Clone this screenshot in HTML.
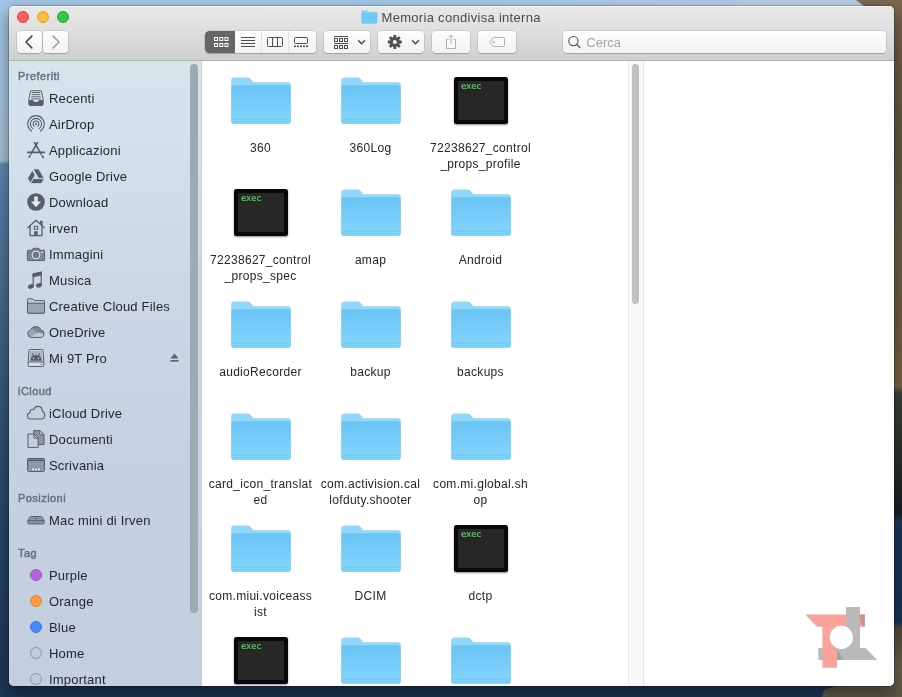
<!DOCTYPE html>
<html lang="it">
<head>
<meta charset="utf-8">
<title>Memoria condivisa interna</title>
<style>
html,body{margin:0;padding:0;}
body{width:902px;height:697px;overflow:hidden;position:relative;font-family:"Liberation Sans",sans-serif;background:#2a4668;}
.abs{position:absolute;}
/* desktop wallpaper */
#wall{position:absolute;left:0;top:0;width:902px;height:697px;overflow:hidden;
 background:linear-gradient(to bottom,#a3c5e6 0px,#a8c6e2 90px,#a9c0d6 158px,#a3bbd1 161px,#5f8bb3 164px,#587fa8 200px,#4e7299 260px,#3f5e83 360px,#2e4b6f 470px,#233f62 600px,#1d3757 697px);}
#mount{position:absolute;left:800px;top:0;width:102px;height:697px;
 background:linear-gradient(to bottom,#7f6851 0px,#6d5b45 60px,#605b40 140px,#6a5e45 260px,#6e5f42 330px,#7c6645 386px,#3b4238 393px,#2b302c 460px,#1a1f23 512px,#1b3758 521px,#183456 600px,#1a3557 622px,#504c3c 628px,#6a6450 670px,#5e5947 697px);
 clip-path:polygon(56px 0,102px 0,102px 697px,22px 697px,24px 690px,42px 684px,90px 640px,90px 20px,64px 6px);}
#shadow{position:absolute;left:9px;top:6px;width:885px;height:680px;border-radius:5px;box-shadow:0 8px 16px 2px rgba(0,0,0,.38),0 0 0 1px rgba(0,0,0,.18);}
/* window */
#win{will-change:transform;position:absolute;left:9px;top:6px;width:885px;height:680px;border-radius:5px;overflow:hidden;background:#fff;}
#tb{position:absolute;left:0;top:0;width:885px;height:54px;background:linear-gradient(to bottom,#e8e8e8 0,#e0e0e0 22px,#cfcfcf 54px);border-bottom:1px solid #b2b2b2;box-shadow:inset 0 1px 0 #f4f4f4;}
.tl{position:absolute;top:5px;width:12px;height:12px;border-radius:50%;box-sizing:border-box;}
.btn{position:absolute;top:25px;height:22px;box-sizing:border-box;border-radius:4px;background:linear-gradient(to bottom,#fdfdfd,#f3f3f3);box-shadow:0 0 0 .5px rgba(0,0,0,.16),0 1px 1px rgba(0,0,0,.18);}
#title{position:absolute;left:372.500px;top:4px;font-size:13px;line-height:16px;color:#4a4a4a;white-space:nowrap;letter-spacing:.3px;}
/* sidebar */
#sb{position:absolute;left:0;top:55px;width:192px;height:625px;background:linear-gradient(to bottom,#d6e5ec 0,#d2e0ea 100px,#cad6e3 260px,#c5d1e0 420px,#c3cfde 625px);border-right:1px solid #c9d0d6;}
.sh{position:absolute;left:9px;font-size:11px;line-height:14px;font-weight:normal;color:#66707a;-webkit-text-stroke:.45px #66707a;white-space:nowrap;letter-spacing:.45px;}
.si{position:absolute;left:40px;font-size:13px;line-height:16px;color:#24272a;white-space:nowrap;letter-spacing:.2px;}
.ico{position:absolute;left:17px;width:20px;height:20px;}
.dot{position:absolute;left:21px;width:12px;height:12px;border-radius:50%;box-sizing:border-box;}
/* content */
#ct{position:absolute;left:193px;top:55px;width:692px;height:625px;background:#fff;overflow:hidden;}
.lbl{position:absolute;width:110px;text-align:center;font-size:12px;line-height:16px;color:#262626;letter-spacing:.3px;}
.fold{position:absolute;width:60px;height:48px;filter:drop-shadow(0 .6px .6px rgba(40,90,130,.45));}
.exec{position:absolute;width:54px;height:47px;box-sizing:border-box;background:#272727;border:4px solid #080808;border-radius:2.5px;box-shadow:0 1px 2px rgba(0,0,0,.45);}
.exec span{position:absolute;left:3px;top:.2px;font-family:"DejaVu Sans Mono","Liberation Mono",monospace;font-size:8.600px;line-height:10px;color:#4fd05f;-webkit-text-stroke:.2px #4fd05f;letter-spacing:-.1px;}
</style>
</head>
<body>
<div id="wall"><div class="abs" style="left:0;top:0;width:902px;height:12px;background:linear-gradient(to right,rgba(190,208,226,0) 45%,rgba(196,212,228,.7) 94%);"></div><div id="mount"></div></div>
<div id="shadow"></div>
<div id="win">
 <div id="tb">
  <div class="tl" style="left:8px;background:#fc605c;border:.5px solid #e0443e;"></div>
  <div class="tl" style="left:28px;background:#fdbc40;border:.5px solid #dfa023;"></div>
  <div class="tl" style="left:48px;background:#34c84a;border:.5px solid #1fa930;"></div>
  <svg class="abs" style="left:352px;top:3px" width="17" height="16" viewBox="0 0 17 16"><path d="M.5 2.2Q.5 1.2 1.5 1.2H5.6Q6.2 1.2 6.6 1.8L7.3 2.8H15.3Q16.3 2.8 16.3 3.8V13.6Q16.3 14.6 15.3 14.6H1.5Q.5 14.6 .5 13.6Z" fill="#8fd5fa"/><path d="M.5 4.6Q.5 3.8 1.4 3.8H15.4Q16.3 3.8 16.3 4.6V13.6Q16.3 14.6 15.3 14.6H1.5Q.5 14.6 .5 13.6Z" fill="#6fc8f6"/></svg>
  <div id="title">Memoria condivisa interna</div>
  <div class="btn" style="left:8px;width:25px;"><svg width="25" height="22" viewBox="0 0 25 22"><path d="M14.8 5.2L9 11l5.8 5.8" fill="none" stroke="#4b4b4b" stroke-width="1.7" stroke-linecap="round" stroke-linejoin="round"/></svg></div>
  <div class="btn" style="left:34px;width:25px;"><svg width="25" height="22" viewBox="0 0 25 22"><path d="M10.2 5.2L16 11l-5.8 5.8" fill="none" stroke="#a3a3a3" stroke-width="1.7" stroke-linecap="round" stroke-linejoin="round"/></svg></div>
  <div class="btn" style="left:196px;width:111px;overflow:hidden;">
    <div class="abs" style="left:0;top:0;width:30px;height:22px;background:#656565;border-radius:4px 0 0 4px;"></div>
    <div class="abs" style="left:56px;top:0;width:1px;height:22px;background:#e2e2e2;"></div>
    <div class="abs" style="left:83px;top:0;width:1px;height:22px;background:#e2e2e2;"></div>
    <svg class="abs" style="left:0;top:0" width="111" height="22" viewBox="0 0 111 22">
      <g fill="none" stroke="#fff" stroke-width="1">
        <rect x="9.5" y="6.5" width="3" height="3"/><rect x="14.75" y="6.5" width="3" height="3"/><rect x="20" y="6.5" width="3" height="3"/>
        <rect x="9.5" y="12.5" width="3" height="3"/><rect x="14.75" y="12.5" width="3" height="3"/><rect x="20" y="12.5" width="3" height="3"/>
      </g>
      <g stroke="#4f4f4f" stroke-width="1" fill="none">
        <path d="M36 6.5h14M36 9.5h14M36 12.5h14M36 15.5h14"/>
        <rect x="62.5" y="6.5" width="15" height="9" rx="1"/><path d="M67.5 6.5v9M72.5 6.5v9"/>
        <rect x="89.5" y="6.5" width="13" height="6" rx="1"/>
      </g>
      <g fill="#4f4f4f"><rect x="89" y="14.5" width="2" height="1.6"/><rect x="92" y="14.5" width="2" height="1.6"/><rect x="95" y="14.5" width="2" height="1.6"/><rect x="98" y="14.5" width="2" height="1.6"/><rect x="101" y="14.5" width="2" height="1.6"/></g>
    </svg>
  </div>
  <div class="btn" style="left:315px;width:46px;"><svg width="46" height="22" viewBox="0 0 46 22">
    <g fill="none" stroke="#4f4f4f" stroke-width="1"><path d="M10 5.5h14M10 12.5h14"/>
      <rect x="10.5" y="7.5" width="3" height="3"/><rect x="15.5" y="7.5" width="3" height="3"/><rect x="20.5" y="7.5" width="3" height="3"/>
      <rect x="10.5" y="14.5" width="3" height="3"/><rect x="15.5" y="14.5" width="3" height="3"/><rect x="20.5" y="14.5" width="3" height="3"/>
      <path d="M34.2 9.4l3.3 3.3 3.3-3.3" stroke-width="1.5"/></g></svg></div>
  <div class="btn" style="left:369px;width:46px;"><svg width="46" height="22" viewBox="0 0 46 22">
    <g transform="translate(16.8 11)"><g fill="#4f4f4f"><rect x="-1.4" y="-7" width="2.8" height="14" rx=".6"/><rect x="-1.4" y="-7" width="2.8" height="14" rx=".6" transform="rotate(45)"/><rect x="-1.4" y="-7" width="2.8" height="14" rx=".6" transform="rotate(90)"/><rect x="-1.4" y="-7" width="2.8" height="14" rx=".6" transform="rotate(135)"/><circle r="5"/></g><circle r="2.1" fill="#f8f8f8"/></g>
    <path d="M34.2 9.4l3.3 3.3 3.3-3.3" fill="none" stroke="#4f4f4f" stroke-width="1.5"/></svg></div>
  <div class="btn" style="left:423px;width:38px;"><svg width="38" height="22" viewBox="0 0 38 22"><g fill="none" stroke="#b0b0b0" stroke-width="1"><path d="M16.5 8.5h-2v9h9v-9h-2"/><path d="M19 13V4.2M16.6 6.4L19 4l2.4 2.4"/></g></svg></div>
  <div class="btn" style="left:469px;width:38px;"><svg width="38" height="22" viewBox="0 0 38 22"><g fill="none" stroke="#b0b0b0" stroke-width="1"><path d="M15.5 6.5H25.5Q26.5 6.5 26.5 7.5V14.5Q26.5 15.5 25.5 15.5H15.5L11.5 11Z" stroke-linejoin="round"/><circle cx="15.6" cy="11" r=".9"/></g></svg></div>
  <div class="btn" style="left:554px;width:323px;"><svg class="abs" style="left:0;top:0" width="22" height="22" viewBox="0 0 22 22"><circle cx="10.4" cy="10.100" r="4.600" fill="none" stroke="#4e4e4e" stroke-width="1.100"/><path d="M13.700 13.400l3.300 3.200" stroke="#4e4e4e" stroke-width="1.300" stroke-linecap="round"/></svg><span class="abs" style="left:23.300px;top:3.500px;font-size:13px;line-height:16px;color:#a6a6a6;">Cerca</span></div>
 </div>
 <div id="sb">
  <div class="sh" style="top:8px">Preferiti</div>
  <svg class="ico" style="top:27px" viewBox="0 0 20 20"><path d="M4.600 2.800h10.800l1.700 8.600v4.800q0 1.200-1.200 1.200H4.100q-1.200 0-1.200-1.200v-4.800Z" fill="#e4eaef" stroke="#565e68" stroke-width="1" stroke-linejoin="round"/><path d="M2.900 11.900h4.300l.8 1.900h4l.8-1.900h4.300v4.300q0 1.200-1.200 1.200H4.100q-1.200 0-1.200-1.200Z" fill="#565e68"/><path d="M5.800 4.600h8.400M5.500 6.700h9M5.200 8.800h9.600M4.900 10.900h10.200" stroke="#565e68" stroke-width="1" fill="none"/></svg>
  <div class="si" style="top:30px">Recenti</div>
  <svg class="ico" style="top:53px" viewBox="0 0 20 20"><g fill="none" stroke="#565e68" stroke-width="1.1" stroke-linecap="round"><path d="M5.6 17A8.3 8.3 0 1 1 14.4 17"/><path d="M6.9 14.6A5.6 5.6 0 1 1 13.1 14.6"/><path d="M8.3 12.2A2.9 2.9 0 1 1 11.7 12.2"/></g><circle cx="10" cy="10" r="1" fill="#565e68"/></svg>
  <div class="si" style="top:56px">AirDrop</div>
  <svg class="ico" style="top:79px" viewBox="0 0 20 20"><g fill="none" stroke="#565e68" stroke-width="1.700" stroke-linecap="round"><path d="M11.400 2.600L5 13.800"/><path d="M8.500 2.600L15 13.900"/><path d="M1.600 12.300H18.400" stroke-width="1.800"/><path d="M3.900 15.800L3.200 17"/><path d="M16.200 15.900L17.100 17.400"/></g></svg>
  <div class="si" style="top:82px">Applicazioni</div>
  <svg class="ico" style="top:105px" viewBox="0 0 20 20"><g fill="#565e68" stroke="#d6e1ea" stroke-width=".7"><path d="M7.100 2.900h5.600l5.500 9.500h-5.600Z"/><path d="M6.300 4.200l2.800 4.900-4.700 8.100-2.800-4.900Z"/><path d="M7.300 12.700h11l-2.800 4.800H4.500Z"/></g></svg>
  <div class="si" style="top:108px">Google Drive</div>
  <svg class="ico" style="top:131px" viewBox="0 0 20 20"><circle cx="10" cy="10" r="8.8" fill="#565e68"/><path d="M8.2 4.6h3.6v5h3.3L10 15.3 4.9 9.6h3.3Z" fill="#e3eaf0"/></svg>
  <div class="si" style="top:134px">Download</div>
  <svg class="ico" style="top:157px" viewBox="0 0 20 20"><g fill="none" stroke="#565e68" stroke-width="1.300" stroke-linejoin="round" stroke-linecap="round"><path d="M1.800 9.800L10 2.200l8.200 7.600"/><path d="M4 8.400V17.600H16V8.400"/><path d="M14.600 5.800V3.400h1.500V7.200"/></g><rect x="8.300" y="8.300" width="3.400" height="3" fill="none" stroke="#565e68" stroke-width="1"/><rect x="8" y="13.200" width="3.600" height="4.400" fill="#565e68"/></svg>
  <div class="si" style="top:160px">irven</div>
  <svg class="ico" style="top:183px" viewBox="0 0 20 20"><path d="M1.400 7.200q0-.9.900-.9h3.500l.9-1.500q.3-.5.900-.5h4.800q.6 0 .9.500l.9 1.500h3.500q.9 0 .9.900v8.500q0 .9-.9.900H2.300q-.9 0-.9-.9Z" fill="#7b8490" stroke="#565e68" stroke-width="1"/><circle cx="10" cy="11" r="3.900" fill="#6d7682" stroke="#e6ecf1" stroke-width="1"/><rect x="15" y="7.800" width="2" height="1.200" fill="#e6ecf1"/></svg>
  <div class="si" style="top:186px">Immagini</div>
  <svg class="ico" style="top:209px" viewBox="0 0 20 20"><g fill="#565e68"><path d="M6.600 3.600L15.800 1.300V5.300L6.600 7.600Z"/><path d="M6.600 3.600H7.800V16.300H6.600Z"/><path d="M14.600 2H15.800V15H14.600Z"/><ellipse cx="4.900" cy="16.500" rx="3" ry="2.200" transform="rotate(-18 4.900 16.500)"/><ellipse cx="13" cy="15.300" rx="3" ry="2.200" transform="rotate(-18 13 15.300)"/></g></svg>
  <div class="si" style="top:212px">Musica</div>
  <svg class="ico" style="top:235px" viewBox="0 0 20 20"><path d="M1.500 3.600q0-.8.800-.8h4.600l1.500 1.700h9.300q.8 0 .8.800v11.100q0 .8-.8.800H2.300q-.8 0-.8-.8Z" fill="#c3cdd8" stroke="#565e68" stroke-width="1" stroke-linejoin="round"/><path d="M1.500 7.200h17v9.200q0 .8-.8.800H2.300q-.8 0-.8-.8Z" fill="#9ba6b3" stroke="#565e68" stroke-width="1" stroke-linejoin="round"/></svg>
  <div class="si" style="top:238px">Creative Cloud Files</div>
  <svg class="ico" style="top:261px" viewBox="0 0 20 20"><path d="M4.800 15.400A3.850 3.850 0 0 1 4.600 7.900A5.700 5.700 0 0 1 15 7.900A3.900 3.900 0 0 1 15.400 15.400Z" fill="#9ca5b0"/><path d="M6 6.600Q8 4.600 10 4.600 13.600 4.600 14.600 8.300 17.600 8.700 18.300 11.200L11.300 10.900Z" fill="#7f8995"/><path d="M4.500 15.100L11.200 10.900Q14.500 10.600 18.400 12.400 18 15 15.500 15.100Z" fill="#c6ced7"/><path d="M4.800 15.400A3.850 3.850 0 0 1 4.600 7.900A5.700 5.700 0 0 1 15 7.900A3.900 3.900 0 0 1 15.400 15.400Z" fill="none" stroke="#565e68" stroke-width="1" stroke-linejoin="round"/></svg>
  <div class="si" style="top:264px">OneDrive</div>
  <svg class="ico" style="top:287px" viewBox="0 0 20 20"><path d="M4 1.500h12q.9 0 1 .9l.8 11.600v3.500q0 1-1 1H3.200q-1 0-1-1v-3.500L3 2.400q.1-.9 1-.9Z" fill="#d3dbe3" stroke="#565e68" stroke-width="1"/><path d="M4.300 3h11.400l.7 9.800H3.600Z" fill="#a9b3bf"/><path d="M2.200 13.900h15.600" stroke="#565e68" stroke-width="1"/><path d="M4.300 12.800q0-5.600 5.700-5.600t5.700 5.600Z" fill="#565e68"/><path d="M6.400 5.800l1.400 2.200M13.600 5.800l-1.400 2.200" stroke="#565e68" stroke-width="1.100" stroke-linecap="round"/><circle cx="7.600" cy="10.400" r=".8" fill="#c6cfd9"/><circle cx="12.400" cy="10.400" r=".8" fill="#c6cfd9"/><circle cx="15.200" cy="16.200" r=".7" fill="#565e68"/></svg>
  <div class="si" style="top:290px">Mi 9T Pro</div>
  <div class="sh" style="top:323px">iCloud</div>
  <svg class="ico" style="top:342px" viewBox="0 0 20 20"><path d="M4.800 16q-3.400 0-3.400-3.200 0-2.500 2.500-3.100-.2-3 2.400-3.400.8-.1 1.500.4 1-3.300 4.300-3.300 4 0 4.200 4.800 2.400.7 2.400 3.700 0 4.100-3.800 4.100Z" fill="#c6d0db" stroke="#565e68" stroke-width="1.100" stroke-linejoin="round"/></svg>
  <div class="si" style="top:345px">iCloud Drive</div>
  <svg class="ico" style="top:368px" viewBox="0 0 20 20"><path d="M7.600 1.600h6.200l4.200 4.200v9.800H7.600Z" fill="#8e98a5" stroke="#565e68" stroke-width="1" stroke-linejoin="round"/><path d="M13.800 1.600v4.200H18Z" fill="#dfe6ec" stroke="#565e68" stroke-width="1" stroke-linejoin="round"/><path d="M2 5h6l4.200 4.200v9.200H2Z" fill="#c6cfd9" stroke="#565e68" stroke-width="1" stroke-linejoin="round"/><path d="M8 5v4.200h4.200" fill="none" stroke="#565e68" stroke-width="1" stroke-linejoin="round"/></svg>
  <div class="si" style="top:371px">Documenti</div>
  <svg class="ico" style="top:394px" viewBox="0 0 20 20"><rect x="1.500" y="3.500" width="17" height="13" rx="1.200" fill="#8e98a5" stroke="#565e68" stroke-width="1"/><path d="M1.500 5.300h17" stroke="#565e68" stroke-width="1.600"/><rect x="6" y="13.600" width="2" height="1.700" fill="#e6ecf1"/><rect x="9" y="13.600" width="2" height="1.700" fill="#e6ecf1"/><rect x="12" y="13.600" width="2" height="1.700" fill="#e6ecf1"/></svg>
  <div class="si" style="top:397px">Scrivania</div>
  <div class="sh" style="top:430px">Posizioni</div>
  <svg class="ico" style="top:449px" viewBox="0 0 20 20"><path d="M5.200 6.500h9.600q.7 0 1.200.6l1.800 2.600q.4.600.4 1.300v1.700q0 1.200-1.200 1.200H3q-1.200 0-1.200-1.200V11q0-.7.400-1.300L4 7.100q.5-.6 1.200-.6Z" fill="#8e98a5" stroke="#565e68" stroke-width="1" stroke-linejoin="round"/><path d="M1.800 10.800h16.400" stroke="#565e68" stroke-width="1"/><rect x="9" y="7.900" width="2" height="1.200" rx=".3" fill="#565e68"/></svg>
  <div class="si" style="top:452px">Mac mini di Irven</div>
  <div class="sh" style="top:485px">Tag</div>
  <div class="dot" style="top:508px;background:#b565d9;border:1px solid #a04fc6;"></div>
  <div class="si" style="top:507px">Purple</div>
  <div class="dot" style="top:534px;background:#fd9a3b;border:1px solid #e8822a;"></div>
  <div class="si" style="top:533px">Orange</div>
  <div class="dot" style="top:560px;background:#4a8cf7;border:1px solid #2f74e6;"></div>
  <div class="si" style="top:559px">Blue</div>
  <div class="dot" style="top:586px;background:#c2cbd6;border:1px solid #8d959e;"></div>
  <div class="si" style="top:585px">Home</div>
  <div class="dot" style="top:612px;background:#c2cbd6;border:1px solid #8d959e;"></div>
  <div class="si" style="top:611px">Important</div>
  <svg class="abs" style="left:160px;top:291px" width="11" height="12" viewBox="0 0 11 12"><path d="M5.500 1.500L9.500 6.500H1.500Z" fill="#5d656f"/><rect x="1.500" y="8" width="8" height="1.700" fill="#5d656f"/></svg>
  <div class="abs" style="left:181px;top:3px;width:7.800px;height:549px;border-radius:4px;background:#9fa9b1;"></div>
 </div>
 <div id="ct">
  <svg class="fold" style="left:28.5px;top:16px" viewBox="0 0 60 48"><defs><linearGradient id="g1" x1="0" y1="0" x2="0" y2="1"><stop offset="0" stop-color="#68c4f5"/><stop offset="1" stop-color="#85d5fb"/></linearGradient></defs><path d="M0.500 3.200Q.5.700 3 .7H17Q18.800.7 19.800 2.200L21.500 4.800Q22 5.500 23 5.500H57Q59.500 5.500 59.500 8V44Q59.500 46.500 57 46.500H3Q.5 46.500.5 44Z" fill="#93d8fb"/><path d="M.5 10.200Q.5 8.200 2.500 8.200H57.500Q59.500 8.200 59.500 10.200V44.500Q59.500 46.800 57.200 46.800H2.800Q.5 46.800.5 44.500Z" fill="url(#g1)"/><path d="M.5 42.300H59.500M.5 44.500H59.500" stroke="#6cc5f3" stroke-width=".8" fill="none"/></svg>
  <div class="lbl" style="left:3.5px;top:79px">360</div>
  <svg class="fold" style="left:138.5px;top:16px" viewBox="0 0 60 48"><defs><linearGradient id="g2" x1="0" y1="0" x2="0" y2="1"><stop offset="0" stop-color="#68c4f5"/><stop offset="1" stop-color="#85d5fb"/></linearGradient></defs><path d="M0.500 3.200Q.5.700 3 .7H17Q18.800.7 19.800 2.200L21.500 4.800Q22 5.500 23 5.500H57Q59.500 5.500 59.500 8V44Q59.500 46.500 57 46.500H3Q.5 46.500.5 44Z" fill="#93d8fb"/><path d="M.5 10.200Q.5 8.200 2.500 8.200H57.500Q59.500 8.200 59.500 10.200V44.500Q59.500 46.800 57.200 46.800H2.800Q.5 46.800.5 44.500Z" fill="url(#g2)"/><path d="M.5 42.300H59.500M.5 44.500H59.500" stroke="#6cc5f3" stroke-width=".8" fill="none"/></svg>
  <div class="lbl" style="left:113.5px;top:79px">360Log</div>
  <div class="exec" style="left:252.0px;top:16px"><span>exec</span></div>
  <div class="lbl" style="left:223.5px;top:79px">72238627_control<br>_props_profile</div>
  <div class="exec" style="left:32.0px;top:128px"><span>exec</span></div>
  <div class="lbl" style="left:3.5px;top:191px">72238627_control<br>_props_spec</div>
  <svg class="fold" style="left:138.5px;top:128px" viewBox="0 0 60 48"><defs><linearGradient id="g5" x1="0" y1="0" x2="0" y2="1"><stop offset="0" stop-color="#68c4f5"/><stop offset="1" stop-color="#85d5fb"/></linearGradient></defs><path d="M0.500 3.200Q.5.700 3 .7H17Q18.800.7 19.800 2.200L21.500 4.800Q22 5.500 23 5.500H57Q59.500 5.500 59.500 8V44Q59.500 46.500 57 46.500H3Q.5 46.500.5 44Z" fill="#93d8fb"/><path d="M.5 10.200Q.5 8.200 2.500 8.200H57.500Q59.500 8.200 59.500 10.200V44.500Q59.500 46.800 57.200 46.800H2.800Q.5 46.800.5 44.500Z" fill="url(#g5)"/><path d="M.5 42.300H59.500M.5 44.500H59.500" stroke="#6cc5f3" stroke-width=".8" fill="none"/></svg>
  <div class="lbl" style="left:113.5px;top:191px">amap</div>
  <svg class="fold" style="left:248.5px;top:128px" viewBox="0 0 60 48"><defs><linearGradient id="g6" x1="0" y1="0" x2="0" y2="1"><stop offset="0" stop-color="#68c4f5"/><stop offset="1" stop-color="#85d5fb"/></linearGradient></defs><path d="M0.500 3.200Q.5.700 3 .7H17Q18.800.7 19.800 2.200L21.500 4.800Q22 5.500 23 5.500H57Q59.500 5.500 59.500 8V44Q59.500 46.500 57 46.500H3Q.5 46.500.5 44Z" fill="#93d8fb"/><path d="M.5 10.200Q.5 8.200 2.500 8.200H57.500Q59.500 8.200 59.500 10.200V44.500Q59.500 46.800 57.200 46.800H2.800Q.5 46.800.5 44.500Z" fill="url(#g6)"/><path d="M.5 42.300H59.500M.5 44.500H59.500" stroke="#6cc5f3" stroke-width=".8" fill="none"/></svg>
  <div class="lbl" style="left:223.5px;top:191px">Android</div>
  <svg class="fold" style="left:28.5px;top:240px" viewBox="0 0 60 48"><defs><linearGradient id="g7" x1="0" y1="0" x2="0" y2="1"><stop offset="0" stop-color="#68c4f5"/><stop offset="1" stop-color="#85d5fb"/></linearGradient></defs><path d="M0.500 3.200Q.5.700 3 .7H17Q18.800.7 19.800 2.200L21.500 4.800Q22 5.500 23 5.500H57Q59.500 5.500 59.500 8V44Q59.500 46.500 57 46.500H3Q.5 46.500.5 44Z" fill="#93d8fb"/><path d="M.5 10.200Q.5 8.200 2.500 8.200H57.500Q59.500 8.200 59.500 10.200V44.500Q59.500 46.800 57.200 46.800H2.800Q.5 46.800.5 44.500Z" fill="url(#g7)"/><path d="M.5 42.300H59.500M.5 44.500H59.500" stroke="#6cc5f3" stroke-width=".8" fill="none"/></svg>
  <div class="lbl" style="left:3.5px;top:303px">audioRecorder</div>
  <svg class="fold" style="left:138.5px;top:240px" viewBox="0 0 60 48"><defs><linearGradient id="g8" x1="0" y1="0" x2="0" y2="1"><stop offset="0" stop-color="#68c4f5"/><stop offset="1" stop-color="#85d5fb"/></linearGradient></defs><path d="M0.500 3.200Q.5.700 3 .7H17Q18.800.7 19.800 2.200L21.500 4.800Q22 5.500 23 5.500H57Q59.500 5.500 59.500 8V44Q59.500 46.500 57 46.500H3Q.5 46.500.5 44Z" fill="#93d8fb"/><path d="M.5 10.200Q.5 8.200 2.500 8.200H57.500Q59.500 8.200 59.500 10.200V44.500Q59.500 46.800 57.200 46.800H2.800Q.5 46.800.5 44.500Z" fill="url(#g8)"/><path d="M.5 42.300H59.500M.5 44.500H59.500" stroke="#6cc5f3" stroke-width=".8" fill="none"/></svg>
  <div class="lbl" style="left:113.5px;top:303px">backup</div>
  <svg class="fold" style="left:248.5px;top:240px" viewBox="0 0 60 48"><defs><linearGradient id="g9" x1="0" y1="0" x2="0" y2="1"><stop offset="0" stop-color="#68c4f5"/><stop offset="1" stop-color="#85d5fb"/></linearGradient></defs><path d="M0.500 3.200Q.5.700 3 .7H17Q18.800.7 19.800 2.200L21.500 4.800Q22 5.500 23 5.500H57Q59.500 5.500 59.500 8V44Q59.500 46.500 57 46.500H3Q.5 46.500.5 44Z" fill="#93d8fb"/><path d="M.5 10.200Q.5 8.200 2.500 8.200H57.500Q59.500 8.200 59.500 10.200V44.500Q59.500 46.800 57.200 46.800H2.800Q.5 46.800.5 44.500Z" fill="url(#g9)"/><path d="M.5 42.300H59.500M.5 44.500H59.500" stroke="#6cc5f3" stroke-width=".8" fill="none"/></svg>
  <div class="lbl" style="left:223.5px;top:303px">backups</div>
  <svg class="fold" style="left:28.5px;top:352px" viewBox="0 0 60 48"><defs><linearGradient id="g10" x1="0" y1="0" x2="0" y2="1"><stop offset="0" stop-color="#68c4f5"/><stop offset="1" stop-color="#85d5fb"/></linearGradient></defs><path d="M0.500 3.200Q.5.700 3 .7H17Q18.800.7 19.800 2.200L21.500 4.800Q22 5.500 23 5.500H57Q59.500 5.500 59.500 8V44Q59.500 46.500 57 46.500H3Q.5 46.500.5 44Z" fill="#93d8fb"/><path d="M.5 10.200Q.5 8.200 2.500 8.200H57.500Q59.500 8.200 59.500 10.200V44.500Q59.500 46.800 57.200 46.800H2.800Q.5 46.800.5 44.500Z" fill="url(#g10)"/><path d="M.5 42.300H59.500M.5 44.500H59.500" stroke="#6cc5f3" stroke-width=".8" fill="none"/></svg>
  <div class="lbl" style="left:3.5px;top:415px">card_icon_translat<br>ed</div>
  <svg class="fold" style="left:138.5px;top:352px" viewBox="0 0 60 48"><defs><linearGradient id="g11" x1="0" y1="0" x2="0" y2="1"><stop offset="0" stop-color="#68c4f5"/><stop offset="1" stop-color="#85d5fb"/></linearGradient></defs><path d="M0.500 3.200Q.5.700 3 .7H17Q18.800.7 19.800 2.200L21.500 4.800Q22 5.500 23 5.500H57Q59.500 5.500 59.500 8V44Q59.500 46.500 57 46.500H3Q.5 46.500.5 44Z" fill="#93d8fb"/><path d="M.5 10.200Q.5 8.200 2.500 8.200H57.500Q59.500 8.200 59.500 10.200V44.500Q59.500 46.800 57.200 46.800H2.800Q.5 46.800.5 44.500Z" fill="url(#g11)"/><path d="M.5 42.300H59.500M.5 44.500H59.500" stroke="#6cc5f3" stroke-width=".8" fill="none"/></svg>
  <div class="lbl" style="left:113.5px;top:415px">com.activision.cal<br>lofduty.shooter</div>
  <svg class="fold" style="left:248.5px;top:352px" viewBox="0 0 60 48"><defs><linearGradient id="g12" x1="0" y1="0" x2="0" y2="1"><stop offset="0" stop-color="#68c4f5"/><stop offset="1" stop-color="#85d5fb"/></linearGradient></defs><path d="M0.500 3.200Q.5.700 3 .7H17Q18.800.7 19.800 2.200L21.500 4.800Q22 5.500 23 5.500H57Q59.500 5.500 59.500 8V44Q59.500 46.500 57 46.500H3Q.5 46.500.5 44Z" fill="#93d8fb"/><path d="M.5 10.200Q.5 8.200 2.500 8.200H57.500Q59.500 8.200 59.500 10.200V44.500Q59.500 46.800 57.200 46.800H2.800Q.5 46.800.5 44.500Z" fill="url(#g12)"/><path d="M.5 42.300H59.500M.5 44.500H59.500" stroke="#6cc5f3" stroke-width=".8" fill="none"/></svg>
  <div class="lbl" style="left:223.5px;top:415px">com.mi.global.sh<br>op</div>
  <svg class="fold" style="left:28.5px;top:464px" viewBox="0 0 60 48"><defs><linearGradient id="g13" x1="0" y1="0" x2="0" y2="1"><stop offset="0" stop-color="#68c4f5"/><stop offset="1" stop-color="#85d5fb"/></linearGradient></defs><path d="M0.500 3.200Q.5.700 3 .7H17Q18.800.7 19.800 2.200L21.500 4.800Q22 5.500 23 5.500H57Q59.500 5.500 59.500 8V44Q59.500 46.500 57 46.500H3Q.5 46.500.5 44Z" fill="#93d8fb"/><path d="M.5 10.200Q.5 8.200 2.500 8.200H57.500Q59.500 8.200 59.500 10.200V44.500Q59.500 46.800 57.200 46.800H2.800Q.5 46.800.5 44.500Z" fill="url(#g13)"/><path d="M.5 42.300H59.500M.5 44.500H59.500" stroke="#6cc5f3" stroke-width=".8" fill="none"/></svg>
  <div class="lbl" style="left:3.5px;top:527px">com.miui.voiceass<br>ist</div>
  <svg class="fold" style="left:138.5px;top:464px" viewBox="0 0 60 48"><defs><linearGradient id="g14" x1="0" y1="0" x2="0" y2="1"><stop offset="0" stop-color="#68c4f5"/><stop offset="1" stop-color="#85d5fb"/></linearGradient></defs><path d="M0.500 3.200Q.5.700 3 .7H17Q18.800.7 19.800 2.200L21.500 4.800Q22 5.500 23 5.500H57Q59.500 5.500 59.500 8V44Q59.500 46.500 57 46.500H3Q.5 46.500.5 44Z" fill="#93d8fb"/><path d="M.5 10.200Q.5 8.200 2.500 8.200H57.500Q59.500 8.200 59.500 10.200V44.500Q59.500 46.800 57.200 46.800H2.800Q.5 46.800.5 44.500Z" fill="url(#g14)"/><path d="M.5 42.300H59.500M.5 44.500H59.500" stroke="#6cc5f3" stroke-width=".8" fill="none"/></svg>
  <div class="lbl" style="left:113.5px;top:527px">DCIM</div>
  <div class="exec" style="left:252.0px;top:464px"><span>exec</span></div>
  <div class="lbl" style="left:223.5px;top:527px">dctp</div>
  <div class="exec" style="left:32.0px;top:576px"><span>exec</span></div>
  <svg class="fold" style="left:138.5px;top:576px" viewBox="0 0 60 48"><defs><linearGradient id="g17" x1="0" y1="0" x2="0" y2="1"><stop offset="0" stop-color="#68c4f5"/><stop offset="1" stop-color="#85d5fb"/></linearGradient></defs><path d="M0.500 3.200Q.5.700 3 .7H17Q18.800.7 19.800 2.200L21.500 4.800Q22 5.500 23 5.500H57Q59.500 5.500 59.500 8V44Q59.500 46.500 57 46.500H3Q.5 46.500.5 44Z" fill="#93d8fb"/><path d="M.5 10.200Q.5 8.200 2.500 8.200H57.500Q59.500 8.200 59.500 10.200V44.500Q59.500 46.800 57.200 46.800H2.800Q.5 46.800.5 44.500Z" fill="url(#g17)"/><path d="M.5 42.300H59.500M.5 44.500H59.500" stroke="#6cc5f3" stroke-width=".8" fill="none"/></svg>
  <svg class="fold" style="left:248.5px;top:576px" viewBox="0 0 60 48"><defs><linearGradient id="g18" x1="0" y1="0" x2="0" y2="1"><stop offset="0" stop-color="#68c4f5"/><stop offset="1" stop-color="#85d5fb"/></linearGradient></defs><path d="M0.500 3.200Q.5.700 3 .7H17Q18.800.7 19.800 2.200L21.500 4.800Q22 5.500 23 5.500H57Q59.500 5.500 59.500 8V44Q59.500 46.500 57 46.500H3Q.5 46.500.5 44Z" fill="#93d8fb"/><path d="M.5 10.200Q.5 8.200 2.500 8.200H57.500Q59.500 8.200 59.500 10.200V44.500Q59.500 46.800 57.200 46.800H2.800Q.5 46.800.5 44.500Z" fill="url(#g18)"/><path d="M.5 42.300H59.500M.5 44.500H59.500" stroke="#6cc5f3" stroke-width=".8" fill="none"/></svg>
  <div class="abs" style="left:426px;top:0;width:16px;height:625px;background:#fafafa;border-left:1px solid #e8e8e8;border-right:1px solid #e4e4e4;box-sizing:border-box;"></div>
  <div class="abs" style="left:429.700px;top:3px;width:7.800px;height:240px;border-radius:4px;background:#c1c1c1;"></div>
  <svg class="abs" style="left:598px;top:540px" width="84" height="72" viewBox="800 601 84 72"><path d="M805.300 614.600H864.800V626.700H837V667.700H822.400V626.700H817Z" fill="#f9a39c"/><path d="M846 607H860V648H865.400L877.400 660H818.300V648H846Z" fill="#bababa"/><path d="M846 614.600H860V626.700H846Z" fill="#bababa"/><path d="M860 614.600H864.800V626.700H863L860 620Z" fill="#cf928f"/><path d="M822.400 648H837V660H822.400Z" fill="#f9a39c"/><path d="M837 649L843.500 660H837Z" fill="#a2a2a2"/><circle cx="841.300" cy="637.400" r="11.600" fill="#fff"/></svg>
 </div>
</div>
</body>
</html>
